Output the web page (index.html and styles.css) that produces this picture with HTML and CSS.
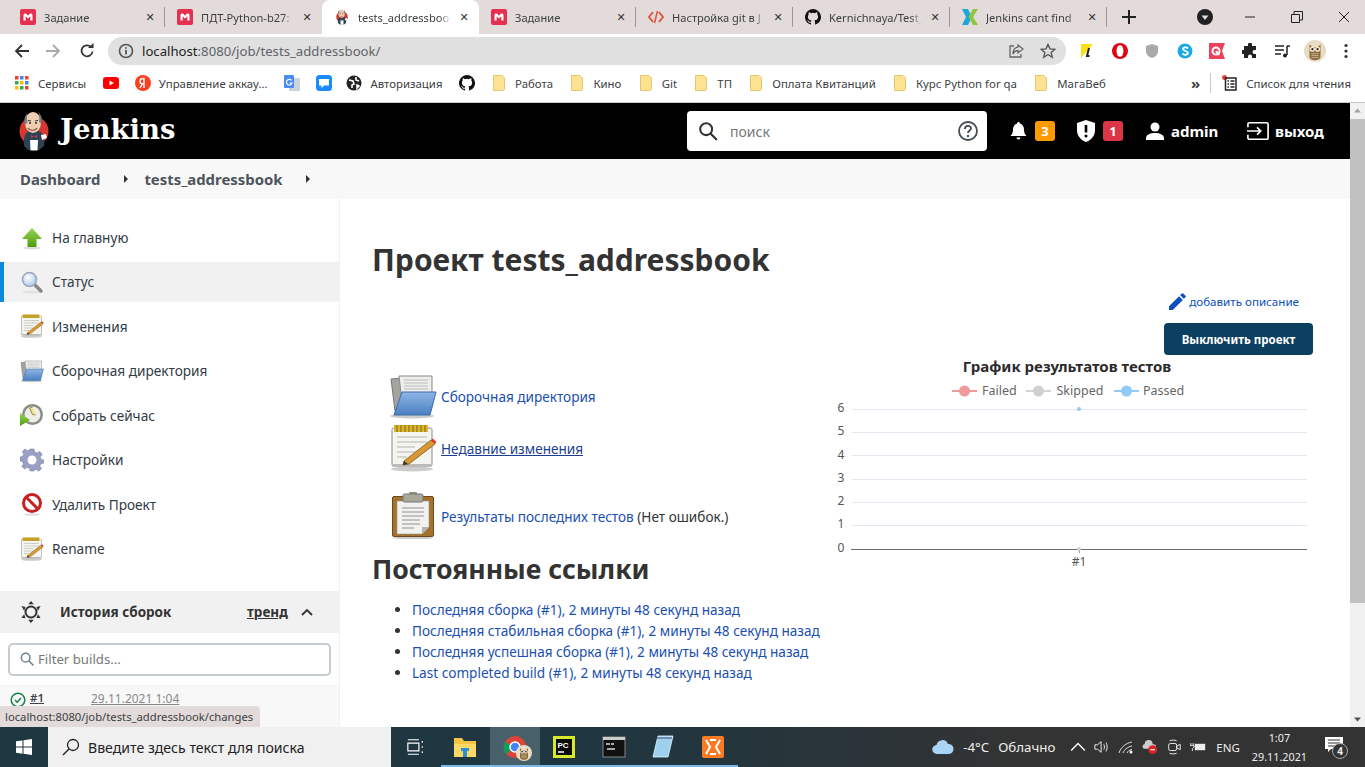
FILE: index.html
```html
<!DOCTYPE html>
<html lang="ru">
<head>
<meta charset="utf-8">
<title>tests_addressbook [Jenkins]</title>
<link rel="stylesheet" href="styles.css">
</head>
<body>
<svg class="sprite" aria-hidden="true">
  <defs>
    <linearGradient id="gBlue" x1="0" y1="0" x2="0" y2="1"><stop offset="0" stop-color="#8fb6e6"/><stop offset="1" stop-color="#4a7fc1"/></linearGradient>
    <linearGradient id="gGreen" x1="0" y1="0" x2="0" y2="1"><stop offset="0" stop-color="#9ad75a"/><stop offset="1" stop-color="#4e9a06"/></linearGradient>
    <radialGradient id="gLens" cx=".4" cy=".35" r=".7"><stop offset="0" stop-color="#fff"/><stop offset="1" stop-color="#a9c6ea"/></radialGradient>
    <symbol id="i-m" viewBox="0 0 16 16"><rect width="16" height="16" rx="2" fill="#e5304f"/><path d="M3.500 11.500V6.200C3.500 5 4.300 4.500 5.200 4.500c.8 0 1.300.3 1.600.8L8 6.800l1.200-1.500c.3-.5.8-.8 1.600-.8.9 0 1.700.5 1.700 1.700v5.300h-2.200V7.200L8 9.500 5.700 7.200v4.300z" fill="#fff"/></symbol>
    <symbol id="i-jenkins" viewBox="0 0 30 40"><circle cx="15" cy="20" r="14.500" fill="#d33833"/><path d="M5 35c-1-8 1-13 5-15h10c4 2 6 7 5 15l-5 4H9z" fill="#2c4356"/><ellipse cx="14" cy="11.500" rx="8" ry="10.500" fill="#eecdb0"/><path d="M6 13C4.500 9 6 4 8.500 2.500 7.500 6 8 9 8.500 12zM22 12c1.500-3 1-7-2-10 .5 3 .5 6 0 9z" fill="#6d7f8c"/><path d="M9 17c2 3 7 3 9 0" stroke="#7a4a32" stroke-width="1.200" fill="none"/><path d="M9 9.500l3 .5M16 10l3-.5" stroke="#333" stroke-width="1"/><circle cx="11" cy="12" r=".9" fill="#231f20"/><circle cx="17" cy="12" r=".9" fill="#231f20"/><path d="M12 24l3 1.500 3-1.500v3l-3-1.500-3 1.500z" fill="#d33833"/><path d="M11 29h8l-.5 10.500h-7z" fill="#fff"/><path d="M22 24l5-1 1 4-5 2z" fill="#fff"/></symbol>
    <symbol id="i-github" viewBox="0 0 16 16"><path fill="#111" d="M8 0a8 8 0 0 0-2.530 15.590c.4.070.55-.17.55-.38v-1.490c-2.230.48-2.700-.95-2.700-.95-.36-.93-.89-1.170-.89-1.170-.73-.5.05-.49.05-.49.8.06 1.230.83 1.230.83.71 1.220 1.870.87 2.330.66.07-.52.28-.87.5-1.070-1.780-.2-3.640-.89-3.640-3.950 0-.87.31-1.590.82-2.150-.08-.2-.36-1.020.08-2.120 0 0 .67-.22 2.200.82a7.600 7.600 0 0 1 4 0c1.530-1.040 2.200-.82 2.200-.82.44 1.100.16 1.920.08 2.120.51.56.82 1.280.82 2.150 0 3.070-1.870 3.750-3.650 3.950.29.25.54.73.54 1.480v2.200c0 .21.15.46.55.38A8 8 0 0 0 8 0z"/></symbol>
    <symbol id="i-code" viewBox="0 0 16 16"><path d="M5 3 1 8l4 5M11 3l4 5-4 5" fill="none" stroke="#e0533d" stroke-width="2"/><path d="M9.500 2 6.500 14" stroke="#e0533d" stroke-width="1.600"/></symbol>
    <symbol id="i-kaggle" viewBox="0 0 16 16"><path d="M0 0h6l4 8-4 8H0l4-8z" fill="#1ea7d6"/><path d="M16 0h-5L6.500 8 11 16h5l-5-8z" fill="#8cc63f"/></symbol>
    <symbol id="i-folder-mini" viewBox="0 0 16 16"><path d="M2.500 .5h8.500l2.500 2.500v11.500l-1 1h-10z" fill="#fde293" stroke="#e5c76b"/></symbol>
    <symbol id="i-folder" viewBox="0 0 48 48"><ellipse cx="23" cy="44" rx="22" ry="2.500" fill="#ccc"/><path d="M2 7l11-1 2 3v30H6z" fill="#a3a3a0" stroke="#777"/><path d="M10 4h33v20l-30 6z" fill="#eeeeec" stroke="#888"/><path d="M15 8h24M15 11h24M15 14h24M15 17h24" stroke="#bbb"/><path d="M13 20h34l-6 23H5z" fill="url(#gBlue)" stroke="#3a6aa8"/></symbol>
    <symbol id="i-notepad" viewBox="0 0 48 48"><ellipse cx="23" cy="45" rx="21" ry="2.500" fill="#ccc"/><rect x="3" y="4" width="40" height="38" rx="1.500" fill="#f4f4f1" stroke="#8a8a86"/><rect x="3.500" y="40" width="39" height="3" fill="#bbb"/><rect x="5" y="1" width="34" height="7" fill="#dcb52e"/><path d="M8 1v7M12 1v7M16 1v7M20 1v7M24 1v7M28 1v7M32 1v7M36 1v7" stroke="#7d6414" stroke-width="1"/><path d="M8 13h30M8 18h30M8 23h18M8 28h20M8 33h10" stroke="#b5b5b0" stroke-width="1.200"/><path d="M15 37 42 16l4 4-26 20-6 1z" fill="#d79a32" stroke="#80571a" stroke-width=".8"/><path d="M42 16l2-1.500 3.500 3.500-1.500 2z" fill="#e63a3a"/><path d="M14 41l1-4 4 3z" fill="#333"/></symbol>
    <symbol id="i-clip" viewBox="0 0 48 48"><ellipse cx="24" cy="47" rx="20" ry="1.500" fill="#ccc"/><rect x="3.500" y="5.500" width="41" height="40" rx="1.500" fill="#a4712e" stroke="#6c4a1c"/><path d="M8 10h32v26l-7 7H8z" fill="#f1f1ef" stroke="#999" stroke-width=".6"/><path d="M40 36h-7v7z" fill="#b5b5b0"/><rect x="14" y="3" width="20" height="8" rx="1.500" fill="#a9a99b" stroke="#777"/><rect x="20" y="1" width="8" height="3" rx="1" fill="#8c8c80"/><path d="M13 17h22M13 21h22M13 25h22M13 29h18M13 33h18M13 37h12" stroke="#c2c2be" stroke-width="1.800"/></symbol>
    <symbol id="i-up" viewBox="0 0 24 24"><ellipse cx="12" cy="22" rx="9" ry="1.500" fill="#ddd"/><path d="M12 2 22 13h-5.500v8h-9v-8H2z" fill="url(#gGreen)"/></symbol>
    <symbol id="i-mag" viewBox="0 0 24 24"><ellipse cx="12" cy="22" rx="10" ry="1.500" fill="#e2e2e2"/><path d="M14 14l7 7" stroke="#888" stroke-width="3.500" stroke-linecap="round"/><circle cx="9.500" cy="9.500" r="7" fill="url(#gLens)" stroke="#9aa8b8" stroke-width="1.600"/></symbol>
    <symbol id="i-clock" viewBox="0 0 24 24"><circle cx="12.500" cy="11.500" r="10.500" fill="#8a8a86"/><circle cx="12.500" cy="11.500" r="8" fill="#eeeee8"/><path d="M12.500 4l-3 1 3 6.500 3 .5" fill="#f7e08a" stroke="#7a6f30" stroke-width=".8"/><path d="M0 10l10 7-10 6z" fill="url(#gGreen)"/></symbol>
    <symbol id="i-gear" viewBox="0 0 24 24"><path d="M10 1h4l.6 3 2.400 1 2.700-1.600 2.500 3-2 2.400.6 2.400 3 .8v3l-3 .7-1 2.400 1.700 2.600-2.900 2.500-2.400-1.900-2.400.9L14 23h-4l-.5-2.700-2.400-1-2.500 1.800-2.800-2.700L3.500 16l-1-2.400-2.500-.6v-4l2.800-.6 1-2.400L2.300 3.600 5 1l2.500 1.700 2-.8z" fill="#9aa0c4" stroke="#6e7399" stroke-width=".5"/><circle cx="12" cy="12" r="4.500" fill="#fff"/></symbol>
    <symbol id="i-no" viewBox="0 0 24 24"><ellipse cx="12" cy="22.500" rx="9" ry="1.200" fill="#ddd"/><circle cx="12" cy="11" r="8.500" fill="#fff" stroke="#c81f1f" stroke-width="3"/><path d="M6 5l12 12" stroke="#c81f1f" stroke-width="3"/></symbol>
    <symbol id="i-search" viewBox="0 0 24 24"><circle cx="10" cy="10" r="6.500" fill="none" stroke="currentColor" stroke-width="2.200"/><path d="M15 15l6 6" stroke="currentColor" stroke-width="2.400" stroke-linecap="round"/></symbol>
    <symbol id="i-owl" viewBox="0 0 24 24"><circle cx="12" cy="12" r="12" fill="#e9dcc3"/><path d="M6 5l3 2.500h6L18 5v14c-2 4-10 4-12 0z" fill="#8a6a3e"/><circle cx="9.200" cy="10" r="2.800" fill="#f3e7cd"/><circle cx="14.800" cy="10" r="2.800" fill="#f3e7cd"/><circle cx="9.200" cy="10" r="1.200" fill="#222"/><circle cx="14.800" cy="10" r="1.200" fill="#222"/><path d="M8 15h8M8 17h8M8 19h8" stroke="#c9b58c"/></symbol>
  </defs>
</svg>

<header class="tabstrip">
  <div class="tab tab-sep"><svg class="fav"><use href="#i-m"/></svg><span class="tab-title">Задание</span><span class="tab-x">✕</span></div>
  <div class="tab"><svg class="fav"><use href="#i-m"/></svg><span class="tab-title">ПДТ-Python-b27:</span><span class="tab-x">✕</span></div>
  <div class="tab tab-active"><svg class="fav"><use href="#i-jenkins"/></svg><span class="tab-title">tests_addressboo</span><span class="tab-x">✕</span></div>
  <div class="tab tab-sep"><svg class="fav"><use href="#i-m"/></svg><span class="tab-title">Задание</span><span class="tab-x">✕</span></div>
  <div class="tab tab-sep"><svg class="fav"><use href="#i-code"/></svg><span class="tab-title">Настройка git в J</span><span class="tab-x">✕</span></div>
  <div class="tab tab-sep"><svg class="fav"><use href="#i-github"/></svg><span class="tab-title">Kernichnaya/Test_</span><span class="tab-x">✕</span></div>
  <div class="tab tab-sep"><svg class="fav"><use href="#i-kaggle"/></svg><span class="tab-title">Jenkins cant find</span><span class="tab-x">✕</span></div>
  <svg class="newtab" viewBox="0 0 14 14"><path d="M7 0v14M0 7h14" stroke="#222" stroke-width="2"/></svg>
  <div class="winctl">
    <svg class="win-drop" viewBox="0 0 16 16"><circle cx="8" cy="8" r="8" fill="#202124"/><path d="M4.500 6.500h7L8 11z" fill="#e3dbd9"/></svg>
    <svg class="win-btn" viewBox="0 0 12 12"><path d="M1 6h10" stroke="#222"/></svg>
    <svg class="win-btn" viewBox="0 0 12 12"><path d="M.5 3.500h8v8h-8zM3 3V.500h8.500V9H9" fill="none" stroke="#222"/></svg>
    <svg class="win-btn" viewBox="0 0 12 12"><path d="M1 1l10 10M11 1L1 11" stroke="#222"/></svg>
  </div>
</header>

<div class="toolbar">
  <svg class="nav nav-back" viewBox="0 0 16 16"><path d="M15 8H2M8 2 2 8l6 6" fill="none" stroke="#333" stroke-width="1.800"/></svg>
  <svg class="nav nav-fwd" viewBox="0 0 16 16"><path d="M1 8h13M8 2l6 6-6 6" fill="none" stroke="#aaa" stroke-width="1.800"/></svg>
  <svg class="nav nav-reload" viewBox="0 0 16 16"><path d="M13.500 8.500A5.500 5.500 0 1 1 12 4" fill="none" stroke="#333" stroke-width="1.800"/><path d="M9 5h5.500V0z" fill="#333"/></svg>
  <div class="omnibox">
    <svg class="omni-info" viewBox="0 0 16 16"><circle cx="8" cy="8" r="6.500" fill="none" stroke="#555" stroke-width="1.600"/><path d="M8 7v4.500M8 4.200v1.600" stroke="#555" stroke-width="1.800"/></svg>
    <span class="url"><span class="url-host">localhost</span>:8080/job/tests_addressbook/</span>
    <svg class="omni-act" viewBox="0 0 16 16"><path d="M6 3H2v11h11v-3" fill="none" stroke="#666" stroke-width="1.300"/><path d="M10 2l5 4-5 4V7.500C7.500 7.500 6 9 5 11c0-4 2-6.500 5-6.800z" fill="none" stroke="#666" stroke-width="1.300"/></svg>
    <svg class="omni-act" viewBox="0 0 16 16"><path d="M8 1.500l2 4.400 4.800.5-3.600 3.200 1 4.700L8 11.500l-4.200 2.800 1-4.700L1.200 6.400 6 5.900z" fill="none" stroke="#555" stroke-width="1.400"/></svg>
  </div>
  <div class="exts">
    <svg class="ext" viewBox="0 0 16 16"><path d="M2 1h12L2 15z" fill="#fde01a"/><path d="M10 5 8 13h2.500" fill="none" stroke="#222" stroke-width="2"/></svg>
    <svg class="ext" viewBox="0 0 16 16"><circle cx="8" cy="8" r="8" fill="#e3000f"/><ellipse cx="8" cy="8" rx="3.500" ry="6" fill="#fff"/></svg>
    <svg class="ext" viewBox="0 0 16 16"><path d="M8 1l6 2v5c0 4-3 6-6 7-3-1-6-3-6-7V3z" fill="#a9a9a9"/></svg>
    <svg class="ext" viewBox="0 0 16 16"><circle cx="8" cy="8" r="7.500" fill="#1ba9e6"/><path d="M11 5.500C10 4 6 4 6 6s5 2 5 4-4 2.500-5.500.500" fill="none" stroke="#fff" stroke-width="1.800"/></svg>
    <svg class="ext" viewBox="0 0 16 16"><path d="M0 0h16l-3 8 3 8H0z" fill="#ee3f5b"/><circle cx="7" cy="8" r="3.500" fill="none" stroke="#fff" stroke-width="2"/><path d="M7 8l3 4" stroke="#fff" stroke-width="2"/></svg>
    <svg class="ext" viewBox="0 0 16 16"><path d="M6 1.500a2 2 0 0 1 4 0V3h4v4h-1.500a2 2 0 0 0 0 4H14v4h-4v-1.500a2 2 0 0 0-4 0V15H2v-4H.500a2 2 0 0 1 0-4H2V3h4z" fill="#222"/></svg>
    <svg class="ext" viewBox="0 0 16 16"><path d="M1 3h9M1 7h9M1 11h6" stroke="#222" stroke-width="1.500"/><path d="M13 3v9" stroke="#222" stroke-width="1.500"/><circle cx="11" cy="12.500" r="2" fill="#222"/><path d="M13 3h3" stroke="#222" stroke-width="1.500"/></svg>
    <svg class="ext ext-owl"><use href="#i-owl"/></svg>
    <svg class="ext" viewBox="0 0 16 16"><circle cx="8" cy="2.500" r="1.600" fill="#333"/><circle cx="8" cy="8" r="1.600" fill="#333"/><circle cx="8" cy="13.500" r="1.600" fill="#333"/></svg>
  </div>
</div>

<nav class="bookmarks">
  <span class="bm"><svg class="bm-ic" viewBox="0 0 16 16"><rect x="1" y="1" width="3.500" height="3.500" fill="#ea4335"/><rect x="6" y="1" width="3.500" height="3.500" fill="#4285f4"/><rect x="11" y="1" width="3.500" height="3.500" fill="#ea4335"/><rect x="1" y="6" width="3.500" height="3.500" fill="#34a853"/><rect x="6" y="6" width="3.500" height="3.500" fill="#fbbc05"/><rect x="11" y="6" width="3.500" height="3.500" fill="#4285f4"/><rect x="1" y="11" width="3.500" height="3.500" fill="#fbbc05"/><rect x="6" y="11" width="3.500" height="3.500" fill="#34a853"/><rect x="11" y="11" width="3.500" height="3.500" fill="#ea4335"/></svg>Сервисы</span>
  <span class="bm"><svg class="bm-ic" viewBox="0 0 16 16"><rect y="2" width="16" height="12" rx="3" fill="#f00"/><path d="M6.500 5.500v5L11 8z" fill="#fff"/></svg></span>
  <span class="bm"><svg class="bm-ic" viewBox="0 0 16 16"><circle cx="8" cy="8" r="8" fill="#fc3f1d"/><path d="M9 13V3.500H8C6 3.500 5 4.700 5 6.200S6 8.700 7.500 8.700H9M7.500 8.700 5 13" fill="none" stroke="#fff" stroke-width="1.400"/></svg>Управление аккау...</span>
  <span class="bm"><svg class="bm-ic" viewBox="0 0 16 16"><rect x="5" y="3" width="11" height="13" rx="1" fill="#ccd3dc"/><rect width="10" height="13" rx="1" fill="#4a8af4"/><path d="M7.500 5.500A2.800 2.800 0 1 0 8 8H5.500" fill="none" stroke="#fff" stroke-width="1.200"/></svg></span>
  <span class="bm"><svg class="bm-ic" viewBox="0 0 16 16"><rect width="16" height="16" rx="3.500" fill="#1a8cff"/><path d="M3 4h10v6.500H8L5.500 13v-2.500H3z" fill="#fff"/></svg></span>
  <span class="bm bm-globe"><svg class="bm-ic" viewBox="0 0 16 16"><circle cx="8" cy="8" r="7.500" fill="#222"/><path d="M3 5l4 1 1 3-2 1v3M10 2v3l3 1M11 10l2 1-2 2z" fill="none" stroke="#fff" stroke-width="1.600"/></svg>Авторизация</span>
  <span class="bm"><svg class="bm-ic"><use href="#i-github"/></svg></span>
  <span class="bm"><svg class="bm-ic"><use href="#i-folder-mini"/></svg>Работа</span>
  <span class="bm"><svg class="bm-ic"><use href="#i-folder-mini"/></svg>Кино</span>
  <span class="bm"><svg class="bm-ic"><use href="#i-folder-mini"/></svg>Git</span>
  <span class="bm"><svg class="bm-ic"><use href="#i-folder-mini"/></svg>ТП</span>
  <span class="bm"><svg class="bm-ic"><use href="#i-folder-mini"/></svg>Оплата Квитанций</span>
  <span class="bm"><svg class="bm-ic"><use href="#i-folder-mini"/></svg>Курс Python for qa</span>
  <span class="bm"><svg class="bm-ic"><use href="#i-folder-mini"/></svg>МагаВеб</span>
  <span class="bm-right">
    <span class="bm-more">»</span>
    <span class="bm-sep"></span>
    <span class="bm"><svg class="bm-ic" viewBox="0 0 16 16"><circle cx="2.500" cy="2.500" r="2.500" fill="#e8433a"/><path d="M3.500 3h10.500v12H3.500z" fill="none" stroke="#222" stroke-width="1.500"/><path d="M5.500 6h1.500M8.500 6h4M5.500 9h1.500M8.500 9h4M5.500 12h1.500M8.500 12h4" stroke="#222" stroke-width="1.500"/></svg>Список для чтения</span>
  </span>
</nav>

<div class="viewport">
  <div class="page">
    <div class="jk-header">
      <div class="jk-logo"><svg class="jk-head"><use href="#i-jenkins"/></svg><span class="jk-name">Jenkins</span></div>
      <div class="jk-search">
        <svg class="jk-search-ic"><use href="#i-search"/></svg>
        <span class="jk-search-text">поиск</span>
        <svg class="jk-help" viewBox="0 0 20 20"><circle cx="10" cy="10" r="9" fill="none" stroke="#444c54" stroke-width="1.800"/><path d="M7 8c0-4 6-4 6-.500 0 2-3 2-3 4.500" fill="none" stroke="#444c54" stroke-width="1.800"/><circle cx="10" cy="15" r="1.200" fill="#444c54"/></svg>
      </div>
      <div class="jk-actions">
        <svg class="jk-bell" viewBox="0 0 16 20"><path d="M8 1a1.300 1.300 0 0 1 1.300 1.500C12 3.300 13.500 5.500 13.500 8.500c0 3.500 1 5 2.500 6.500H0c1.500-1.500 2.500-3 2.500-6.500C2.500 5.500 4 3.300 6.700 2.500A1.300 1.300 0 0 1 8 1z" fill="#fff"/><path d="M6 16.500h4a2 2 0 0 1-4 0z" fill="#fff"/></svg>
        <span class="jk-badge jk-badge-warn">3</span>
        <svg class="jk-shield" viewBox="0 0 18 22"><path d="M9 0l9 3v7c0 6-4 10-9 12-5-2-9-6-9-12V3z" fill="#fff"/><path d="M9 5v7.500" stroke="#000" stroke-width="2.600"/><circle cx="9" cy="16" r="1.500" fill="#000"/></svg>
        <span class="jk-badge jk-badge-err">1</span>
        <svg class="jk-user" viewBox="0 0 18 18"><circle cx="9" cy="5" r="4.500" fill="#fff"/><path d="M0 18v-2c0-3 4-5 9-5s9 2 9 5v2z" fill="#fff"/></svg>
        <span class="jk-admin">admin</span>
        <svg class="jk-logout" viewBox="0 0 24 20"><path d="M1 6V2.500A1.500 1.500 0 0 1 2.500 1h19A1.500 1.500 0 0 1 23 2.500v15a1.500 1.500 0 0 1-1.500 1.500h-19A1.500 1.500 0 0 1 1 17.500V14" fill="none" stroke="#fff" stroke-width="1.800"/><path d="M0 10h15M11 6l4 4-4 4" fill="none" stroke="#fff" stroke-width="1.800"/></svg>
        <span class="jk-exit">выход</span>
      </div>
    </div>
    <div class="crumbs">
      <span class="crumb crumb-first">Dashboard</span><span class="crumb-arrow"></span>
      <span class="crumb">tests_addressbook</span><span class="crumb-arrow"></span>
    </div>
    <div class="layout">
      <aside class="side">
        <ul class="side-tasks">
          <li class="task"><svg class="task-ic"><use href="#i-up"/></svg>На главную</li>
          <li class="task task-active"><svg class="task-ic"><use href="#i-mag"/></svg>Статус</li>
          <li class="task"><svg class="task-ic"><use href="#i-notepad"/></svg>Изменения</li>
          <li class="task"><svg class="task-ic"><use href="#i-folder"/></svg>Сборочная директория</li>
          <li class="task"><svg class="task-ic"><use href="#i-clock"/></svg>Собрать сейчас</li>
          <li class="task"><svg class="task-ic"><use href="#i-gear"/></svg>Настройки</li>
          <li class="task"><svg class="task-ic"><use href="#i-no"/></svg>Удалить Проект</li>
          <li class="task"><svg class="task-ic"><use href="#i-notepad"/></svg>Rename</li>
        </ul>
        <div class="hist-head">
          <svg class="hist-ic" viewBox="0 0 24 24"><circle cx="12" cy="12" r="6" fill="none" stroke="#333" stroke-width="2.200"/><path d="M12 0l3 3.500H9zM12 24l-3-3.500h6zM1.500 5.500l4.500 1-1.500 4zM22.500 5.500l-4.500 1 1.500 4zM1.500 18.500l3-4 1.500 4zM22.500 18.500l-3-4-1.500 4z" fill="#333"/></svg>
          <span class="hist-title">История сборок</span>
          <span class="hist-trend">тренд</span>
          <svg class="hist-chev" viewBox="0 0 12 8"><path d="M1 7l5-5 5 5" fill="none" stroke="#333" stroke-width="1.800"/></svg>
        </div>
        <div class="filter-wrap">
          <div class="filter"><svg class="filter-ic"><use href="#i-search"/></svg><span class="filter-text">Filter builds...</span></div>
        </div>
        <div class="build">
          <svg class="build-ok" viewBox="0 0 16 16"><circle cx="8" cy="8" r="6.800" fill="none" stroke="#138347" stroke-width="1.500"/><path d="M5 8l2.200 2.200L11 6" fill="none" stroke="#138347" stroke-width="1.500"/></svg>
          <span class="build-no">#1</span>
          <span class="build-date">29.11.2021 1:04</span>
        </div>
      </aside>
      <main class="main">
        <h1 class="title">Проект tests_addressbook</h1>
        <div class="desc-row">
          <svg class="desc-pen" viewBox="0 0 16 16"><path d="M0 16v-3.500L9.500 3 13 6.500 3.500 16zM10.500 2l1.500-1.500a1 1 0 0 1 1.400 0l2.100 2.100a1 1 0 0 1 0 1.400L14 5.500z" fill="#0b4fbd"/></svg>
          <span class="desc-link">добавить описание</span>
        </div>
        <div class="btn-row"><span class="btn-disable">Выключить проект</span></div>
        <div class="columns">
          <div class="col-left">
            <div class="big-link"><svg class="big-ic"><use href="#i-folder"/></svg><a class="lnk">Сборочная директория</a></div>
            <div class="big-link"><svg class="big-ic"><use href="#i-notepad"/></svg><a class="lnk lnk-hover">Недавние изменения</a></div>
            <div class="big-link big-link-tests"><svg class="big-ic"><use href="#i-clip"/></svg><span><a class="lnk">Результаты последних тестов</a> (Нет ошибок.)</span></div>
            <h2 class="perma-title">Постоянные ссылки</h2>
            <ul class="perma">
              <li><a class="lnk">Последняя сборка (#1), 2 минуты 48 секунд назад</a></li>
              <li><a class="lnk">Последняя стабильная сборка (#1), 2 минуты 48 секунд назад</a></li>
              <li><a class="lnk">Последняя успешная сборка (#1), 2 минуты 48 секунд назад</a></li>
              <li><a class="lnk">Last completed build (#1), 2 минуты 48 секунд назад</a></li>
            </ul>
          </div>
          <svg class="chart" viewBox="0 0 490 220" width="490" height="220">
            <text class="ch-title" x="237" y="14" text-anchor="middle">График результатов тестов</text>
            <path d="M122 33h25" stroke="#ef9a9a" stroke-width="2"/><circle cx="134.500" cy="33" r="5.500" fill="#ef9a9a"/>
            <text class="ch-leg" x="152" y="37">Failed</text>
            <path d="M196 33h25" stroke="#d4d4d4" stroke-width="2"/><circle cx="208.500" cy="33" r="5.500" fill="#d0d0d0"/>
            <text class="ch-leg" x="226.500" y="37">Skipped</text>
            <path d="M284 33h25" stroke="#90caf9" stroke-width="2"/><circle cx="296.500" cy="33" r="5.500" fill="#90caf9"/>
            <text class="ch-leg" x="313" y="37">Passed</text>
            <path d="M22 51.500h455M22 74.500h455M22 97.500h455M22 121.500h455M22 144.500h455M22 167.500h455" stroke="#e3e6f0"/>
            <path d="M21 191.500h456" stroke="#666c72"/>
            <path d="M249.500 191v4" stroke="#999"/>
            <circle cx="249" cy="51" r="2" fill="#90caf9"/>
            <circle cx="249" cy="191" r="2" fill="#d0d0d0"/>
            <g class="ch-axis" text-anchor="middle">
              <text x="11" y="54">6</text><text x="11" y="77">5</text><text x="11" y="101">4</text><text x="11" y="124">3</text><text x="11" y="147">2</text><text x="11" y="170">1</text><text x="11" y="194">0</text>
              <text x="249" y="208">#1</text>
            </g>
          </svg>
        </div>
      </main>
    </div>
    <div class="status-bubble">localhost:8080/job/tests_addressbook/changes</div>
  </div>
  <div class="scrollbar">
    <svg class="sb-arrow" viewBox="0 0 15 15"><path d="M4 9.500l3.500-4 3.500 4z" fill="#a3a3a3"/></svg>
    <div class="sb-track"><div class="sb-thumb"></div></div>
    <svg class="sb-arrow" viewBox="0 0 15 15"><path d="M4 5.500l3.500 4 3.500-4z" fill="#505050"/></svg>
  </div>
</div>

<footer class="taskbar">
  <div class="tb-start"><svg class="tb-win" viewBox="0 0 16 16"><path d="M0 2.300l6.500-.9v6.200H0zM7.500 1.300 16 0v7.600H7.500zM0 8.500h6.500v6.200L0 13.800zM7.500 8.500H16V16l-8.500-1.200z" fill="#fff"/></svg></div>
  <div class="tb-search"><svg class="tb-lens" viewBox="0 0 18 18"><circle cx="11" cy="7" r="5.500" fill="none" stroke="#222" stroke-width="1.300"/><path d="M7 11l-6 6" stroke="#222" stroke-width="1.500"/></svg><span>Введите здесь текст для поиска</span></div>
  <div class="tb-apps">
    <span class="tb-app"><svg class="tb-ic tb-ic-small" viewBox="0 0 20 20"><path d="M1 1.500h13M1 18.500h13M1 5.500h13v9H1zM18 3v2M18 9v2M18 15v2" fill="none" stroke="#fff" stroke-width="1.400"/></svg></span>
    <span class="tb-app tb-on"><svg class="tb-ic" viewBox="0 0 24 24"><path d="M1 3h8l2 3h12v16H1z" fill="#f6c445"/><rect x="1" y="9" width="22" height="13" fill="#ffd966"/><path d="M8 13h8v3h-2v6h-4v-6H8z" fill="#2a8fd8"/></svg></span>
    <span class="tb-app tb-on tb-active"><svg class="tb-ic" viewBox="0 0 24 24"><circle cx="12" cy="12" r="11" fill="#db4437"/><path d="M12 12 3 19a11 11 0 0 1-1-12z" fill="#0f9d58"/><path d="M12 12l11 0a11 11 0 0 1-9 11z" fill="#ffcd40"/><circle cx="12" cy="12" r="5" fill="#4285f4" stroke="#fff" stroke-width="1.500"/></svg><svg class="tb-owl"><use href="#i-owl"/></svg></span>
    <span class="tb-app tb-on"><svg class="tb-ic" viewBox="0 0 24 24"><rect x="1" y="1" width="22" height="22" fill="#d8e82a"/><rect x="4" y="4" width="16" height="16" fill="#0b0b0b"/><text class="tb-pc" x="5.500" y="12.500">PC</text><path d="M6 17h6" stroke="#fff" stroke-width="1.500"/></svg></span>
    <span class="tb-app tb-on"><svg class="tb-ic" viewBox="0 0 24 24"><rect x="1" y="2" width="22" height="20" fill="#111" stroke="#888"/><rect x="1" y="2" width="22" height="3" fill="#ccc"/><path d="M4 9h4M9 9h3M5 14h8" stroke="#ddd" stroke-width="1.500"/></svg></span>
    <span class="tb-app tb-on"><svg class="tb-ic" viewBox="0 0 24 24"><path d="M7 1h15l-5 21H2z" fill="#9fd0ee" stroke="#dff" stroke-width=".8"/><path d="M6 3h15" stroke="#78b" stroke-width="2"/></svg></span>
    <span class="tb-app tb-on"><svg class="tb-ic" viewBox="0 0 24 24"><rect x="1" y="1" width="22" height="22" rx="2" fill="#fb7a24"/><path d="M5 5l4 7-4 7M19 5l-4 7 4 7M9 5h6M9 19h6" fill="none" stroke="#fff" stroke-width="2"/></svg></span>
  </div>
  <div class="tb-tray">
    <svg class="tb-cloud" viewBox="0 0 22 16"><path d="M5 15a4.500 4.500 0 0 1-.5-9A6 6 0 0 1 16 5a5 5 0 0 1 1 10z" fill="#a9d4f5"/></svg>
    <span class="tb-temp">-4°C</span>
    <span class="tb-weather">Облачно</span>
    <svg class="tb-tr tb-chev" viewBox="0 0 14 10"><path d="M1 8l6-6 6 6" fill="none" stroke="#fff" stroke-width="1.200"/></svg>
    <svg class="tb-tr" viewBox="0 0 18 16"><path d="M1 5.500h3L8 2v12L4 10.500H1zM11 5c1 2 1 4 0 6M13.500 3c1.700 3 1.700 7 0 10" fill="none" stroke="#fff" stroke-width="1"/></svg>
    <svg class="tb-tr" viewBox="0 0 16 16"><path d="M1 14C3 8 8 4 14 3M5 14c1-3 4-6 9-7M9 14c1-2 2-3 5-3.500" fill="none" stroke="#ddd" stroke-width="1"/><circle cx="13" cy="13" r="1.500" fill="#fff"/></svg>
    <svg class="tb-tr" viewBox="0 0 18 16"><path d="M2 10a3 3 0 0 1 1-5.500A4.500 4.500 0 0 1 12 5a3 3 0 0 1 3 5z" fill="#ccc"/><circle cx="12" cy="11" r="5" fill="#d8232a"/><path d="M9.500 11h5" stroke="#fff" stroke-width="1.400"/></svg>
    <svg class="tb-tr" viewBox="0 0 16 18"><rect x="2" y="5" width="9" height="8" rx="2" fill="none" stroke="#fff"/><path d="M11 8l4-2v6l-4-2zM3 2c2-1 6-1 8 0M3 16c2 1 6 1 8 0" fill="none" stroke="#fff"/></svg>
    <svg class="tb-tr" viewBox="0 0 20 16"><rect x="6" y="4" width="13" height="8" fill="#eee"/><path d="M1 3v3M4 3v3M0 6h5v2l-2 2v3" fill="none" stroke="#fff"/></svg>
    <span class="tb-lang">ENG</span>
    <div class="tb-clock"><span>1:07</span><span>29.11.2021</span></div>
    <span class="tb-notif"><svg class="tb-note" viewBox="0 0 18 16"><path d="M0 0h18v12H6l-3 3v-3H0z" fill="#fff"/><path d="M3 3h12M3 6h12M3 9h8" stroke="#333"/></svg><span class="tb-count">4</span></span>
  </div>
</footer>
</body>
</html>
```

FILE: styles.css
```css
* { box-sizing: border-box; }
html, body { margin: 0; padding: 0; }
body {
  width: 1365px;
  height: 767px;
  overflow: hidden;
  display: flex;
  flex-direction: column;
  background: #fff;
  font-family: "Noto Sans", "Open Sans", sans-serif;
  color: #333;
}
.sprite { position: absolute; width: 0; height: 0; overflow: hidden; }

/* browser tabs */
.tabstrip {
  height: 34px;
  flex: none;
  display: flex;
  align-items: center;
  padding-left: 8px;
  background: #e3dbd9;
}
.tab {
  width: 157px;
  height: 34px;
  flex: none;
  display: flex;
  align-items: center;
  padding: 0 8px 0 12px;
  font-size: 11.100px;
  color: #3c4043;
}
.tab-sep { background: linear-gradient(#9f9896, #9f9896) right center / 1px 20px no-repeat; }
.tab-active { background: #fff; border-radius: 8px 8px 0 0; }
.fav { width: 16px; height: 16px; flex: none; margin-right: 8px; }
.tab-title {
  flex: 1;
  min-width: 0;
  margin-right: 6px;
  overflow: hidden;
  white-space: nowrap;
  -webkit-mask-image: linear-gradient(90deg, #000 88%, transparent);
  mask-image: linear-gradient(90deg, #000 88%, transparent);
}
.tab-x { width: 14px; font-size: 11px; font-weight: 700; color: #333; text-align: center; flex: none; font-family: "DejaVu Sans", sans-serif; }
.newtab { width: 14px; height: 14px; flex: none; margin-left: 15px; }
.winctl { margin-left: auto; display: flex; align-items: center; padding-right: 15px; }
.win-drop { width: 16px; height: 16px; margin-right: 31px; }
.win-btn { width: 12px; height: 12px; margin-left: 35px; }
.win-btn:nth-child(2) { margin-left: 0; }

/* browser toolbar */
.toolbar {
  height: 34px;
  flex: none;
  display: flex;
  align-items: center;
  background: #fff;
  padding-left: 14px;
}
.nav { width: 16px; height: 16px; flex: none; }
.nav-fwd { margin-left: 15px; }
.nav-reload { margin-left: 18px; }
.omnibox {
  width: 958px;
  height: 28px;
  margin-left: 13px;
  flex: none;
  display: flex;
  align-items: center;
  background: #e0e0e0;
  border-radius: 14px;
  padding: 0 10px 0 10px;
  font-size: 13.170px;
  color: #5f6368;
}
.omni-info { width: 16px; height: 16px; margin-right: 8px; flex: none; }
.url { flex: 1; white-space: nowrap; }
.url-host { color: #222; }
.omni-act { width: 16px; height: 16px; margin-left: 16px; flex: none; }
.exts { display: flex; align-items: center; margin-left: 13px; }
.ext { width: 16px; height: 16px; margin-right: 16.500px; flex: none; }
.ext-owl { width: 22px; height: 22px; margin-left: -3px; margin-right: 12px; }

/* bookmarks */
.bookmarks {
  height: 35px;
  flex: none;
  display: flex;
  align-items: center;
  gap: 16.300px;
  padding: 0 14px 4px;
  font-size: 11.400px;
  color: #3c4043;
  background: #fff;
  border-bottom: 1px solid #c8c8c8;
  white-space: nowrap;
}
.bm { display: flex; align-items: center; gap: 8px; }
.bm-globe { margin-left: -2px; }
.bm-ic { width: 16px; height: 16px; flex: none; }
.bm-right { margin-left: auto; display: flex; align-items: center; }
.bm-more { font-size: 15px; font-weight: 700; margin-right: 10px; }
.bm-sep { width: 1px; height: 20px; background: #c8c8c8; margin-right: 11px; }

/* viewport */
.viewport { flex: 1; min-height: 0; display: flex; }
.page { flex: 1; min-width: 0; display: flex; flex-direction: column; position: relative; overflow: hidden; }
.scrollbar { width: 15px; flex: none; display: flex; flex-direction: column; background: #f1f1f1; }
.sb-arrow { width: 15px; height: 15px; flex: none; }
.sb-track { flex: 1; min-height: 0; }
.sb-thumb { height: 484px; margin-top: 1px; background: #c1c1c1; }

/* jenkins header */
.jk-header {
  height: 56px;
  flex: none;
  display: flex;
  align-items: center;
  background: #000;
  padding-left: 19px;
}
.jk-logo { display: flex; align-items: center; width: 668px; }
.jk-head { width: 30px; height: 40px; flex: none; margin-right: 11px; }
.jk-name { font-family: "DejaVu Serif", serif; font-size: 27.500px; line-height: 32px; padding-bottom: 4px; font-weight: 700; color: #fff; }
.jk-search {
  width: 300px;
  height: 40px;
  flex: none;
  display: flex;
  align-items: center;
  background: #fff;
  border-radius: 4px;
  padding: 0 9px 0 10px;
  color: #333;
}
.jk-search-ic { width: 22px; height: 22px; flex: none; margin-right: 11px; }
.jk-search-text { flex: 1; font-size: 14px; color: #777; }
.jk-help { width: 20px; height: 20px; flex: none; }
.jk-actions { display: flex; align-items: center; margin-left: 23px; color: #fff; font-weight: 700; font-size: 15px; }
.jk-bell { width: 17px; height: 20px; flex: none; margin-right: 8px; }
.jk-badge {
  width: 20px;
  height: 20px;
  border-radius: 3px;
  display: flex;
  align-items: center;
  justify-content: center;
  font-size: 13px;
  flex: none;
}
.jk-badge-warn { background: #fe9a00; }
.jk-badge-err { background: #dc3545; }
.jk-shield { width: 18px; height: 22px; flex: none; margin: 0 8px 0 22px; }
.jk-user { width: 18px; height: 18px; flex: none; margin: 0 7px 0 23px; }
.jk-admin { width: 49px; }
.jk-logout { width: 22px; height: 20px; flex: none; margin: 0 6px 0 27px; }

/* breadcrumbs */
.crumbs {
  height: 40px;
  flex: none;
  display: flex;
  align-items: center;
  padding-left: 20px;
  background: #f8f8f8;
  font-size: 14.900px;
  font-weight: 700;
  color: #4d545d;
}
.crumb-arrow {
  width: 0;
  height: 0;
  margin: 0 16px 0 24px;
  border-left: 4px solid #333;
  border-top: 4px solid transparent;
  border-bottom: 4px solid transparent;
}

/* layout */
.layout { flex: 1; min-height: 0; display: flex; }
.side {
  width: 340px;
  flex: none;
  border-right: 1px solid #f0f0f0;
  display: flex;
  flex-direction: column;
  overflow: hidden;
}
.side-tasks { list-style: none; margin: 0; padding: 19px 0 0; display: flex; flex-direction: column; gap: 4.450px; }
.task {
  height: 40px;
  display: flex;
  align-items: center;
  padding: 0 0 1px 20px;
  font-size: 13.650px;
  color: #333b45;
}
.task-active { background: #f1f1f1; box-shadow: inset 4px 0 0 #0b8ad8; }
.task-ic { width: 24px; height: 24px; flex: none; margin-right: 8px; }
.hist-head {
  height: 42px;
  flex: none;
  margin-top: 22px;
  display: flex;
  align-items: center;
  background: #f1f1f1;
  padding: 0 0 1px 20px;
  font-size: 13.500px;
  font-weight: 700;
  color: #333;
}
.hist-ic { width: 22px; height: 22px; flex: none; margin-right: 18px; }
.hist-title { width: 187px; }
.hist-trend { width: 40px; text-decoration: underline; }
.hist-chev { width: 12px; height: 8px; margin-left: 14px; }
.filter-wrap { height: 52px; flex: none; padding: 10px 8px 9px 8px; }
.filter {
  height: 33px;
  display: flex;
  align-items: center;
  border: 2px solid #c3ccd1;
  border-radius: 5px;
  padding: 0 0 2px 9px;
  font-size: 13.200px;
  color: #777;
}
.filter-ic { width: 16px; height: 16px; margin-right: 3px; color: #6d7f8e; flex: none; }
.build {
  flex: 1;
  display: flex;
  align-items: flex-start;
  padding: 4px 0 0 10px;
  background: #f8f8f8;
  font-size: 12px;
  border-top: 1px solid #f2f2f2;
}
.build-ok { width: 16px; height: 16px; flex: none; margin: 2px 4px 0 0; }
.build-no { font-weight: 600; font-size: 11.500px; text-decoration: underline; color: #444; width: 61px; }
.build-date { text-decoration: underline; color: #888; }
.status-bubble {
  position: absolute;
  left: 0;
  bottom: 0;
  width: 260px;
  height: 21px;
  padding-left: 5px;
  background: #e3dbd9;
  border-radius: 0 4px 0 0;
  font-size: 11.250px;
  line-height: 21px;
  color: #3c4043;
  white-space: nowrap;
}

/* main */
.main { flex: 1; min-width: 0; padding: 0 37px 0 32px; display: flex; flex-direction: column; }
.title { margin: 39px 0 0; font-size: 30px; line-height: 44px; font-weight: 700; color: #333; }
.desc-row {
  display: flex;
  align-items: center;
  justify-content: flex-end;
  margin-top: 10px;
  padding-right: 14px;
  height: 18px;
  font-size: 11.600px;
  color: #0b4fbd;
}
.desc-pen { width: 17px; height: 17px; margin-right: 3px; flex: none; }
.btn-row { display: flex; justify-content: flex-end; margin-top: 13px; }
.btn-disable {
  height: 32px;
  width: 149px;
  display: flex;
  align-items: center;
  justify-content: center;
  background: #0b4060;
  border-radius: 4px;
  color: #fff;
  font-size: 11.500px;
  font-weight: 700;
}
.columns { display: flex; margin-top: 3px; }
.col-left { width: 458px; flex: none; padding-top: 14px; font-size: 13.580px; }
.big-link { display: flex; align-items: center; height: 48px; margin: 0 0 4px 17px; }
.big-link-tests { margin-top: 20px; margin-bottom: 0; }
.big-ic { width: 48px; height: 48px; flex: none; margin-right: 4px; }
.big-link-tests .big-ic { margin-top: -2px; }
.lnk { color: #1a4fb0; }
.lnk-hover { color: #1c3f94; text-decoration: underline; }
.perma-title { margin: 13px 0 0; font-size: 26.600px; line-height: 32px; font-weight: 700; color: #333; }
.perma { margin: 14px 0 0; padding-left: 40px; line-height: 21px; color: #333; }
.chart { flex: none; overflow: visible; }
.ch-title { font: 700 15px "Noto Sans", sans-serif; fill: #2b2b2b; }
.ch-leg { font: 12.500px "Noto Sans", sans-serif; fill: #666; }
.ch-axis { font: 12px "Noto Sans", sans-serif; fill: #555; }

/* taskbar */
.taskbar {
  height: 40px;
  flex: none;
  display: flex;
  background: linear-gradient(90deg, #1e3740 0%, #1f3640 45%, #333 75%, #333 100%);
  color: #fff;
}
.tb-start { width: 48px; flex: none; display: flex; align-items: center; justify-content: center; }
.tb-win { width: 16px; height: 16px; }
.tb-search {
  width: 343px;
  flex: none;
  display: flex;
  align-items: center;
  padding-left: 14px;
  background: #f0f0f0;
  color: #222;
  font-size: 14.100px;
}
.tb-lens { width: 18px; height: 18px; margin-right: 8px; flex: none; }
.tb-apps { display: flex; }
.tb-app { width: 49.500px; height: 40px; display: flex; align-items: center; justify-content: center; position: relative; flex: none; }
.tb-on { box-shadow: inset 0 -2px 0 #76b9ed; }
.tb-active { background: #48606a; }
.tb-ic { width: 24px; height: 24px; flex: none; }
.tb-ic-small { width: 17px; height: 18px; }
.tb-owl { width: 16px; height: 16px; position: absolute; left: 26px; top: 18px; }
.tb-pc { font: 700 8px "Liberation Sans", sans-serif; fill: #fff; }
.tb-tray { margin-left: auto; display: flex; align-items: center; font-size: 13.300px; color: #eee; }
.tb-cloud { width: 22px; height: 16px; margin-right: 9px; flex: none; }
.tb-temp { margin-right: 9px; }
.tb-weather { margin-right: 15px; }
.tb-tr { width: 16px; height: 16px; margin-right: 8px; flex: none; }
.tb-lang { font-size: 11.500px; margin: 0 12px 0 2px; }
.tb-clock { display: flex; flex-direction: column; align-items: center; font-size: 10.800px; line-height: 19px; margin-right: 18px; }
.tb-notif { position: relative; width: 24px; height: 24px; margin-right: 16px; flex: none; }
.tb-note { width: 18px; height: 16px; position: absolute; left: 0; top: 2px; }
.tb-count {
  position: absolute;
  left: 7px;
  top: 8px;
  width: 16px;
  height: 16px;
  border-radius: 50%;
  background: #333;
  border: 1px solid #aaa;
  font-size: 10px;
  font-weight: 700;
  line-height: 14px;
  text-align: center;
}
```
